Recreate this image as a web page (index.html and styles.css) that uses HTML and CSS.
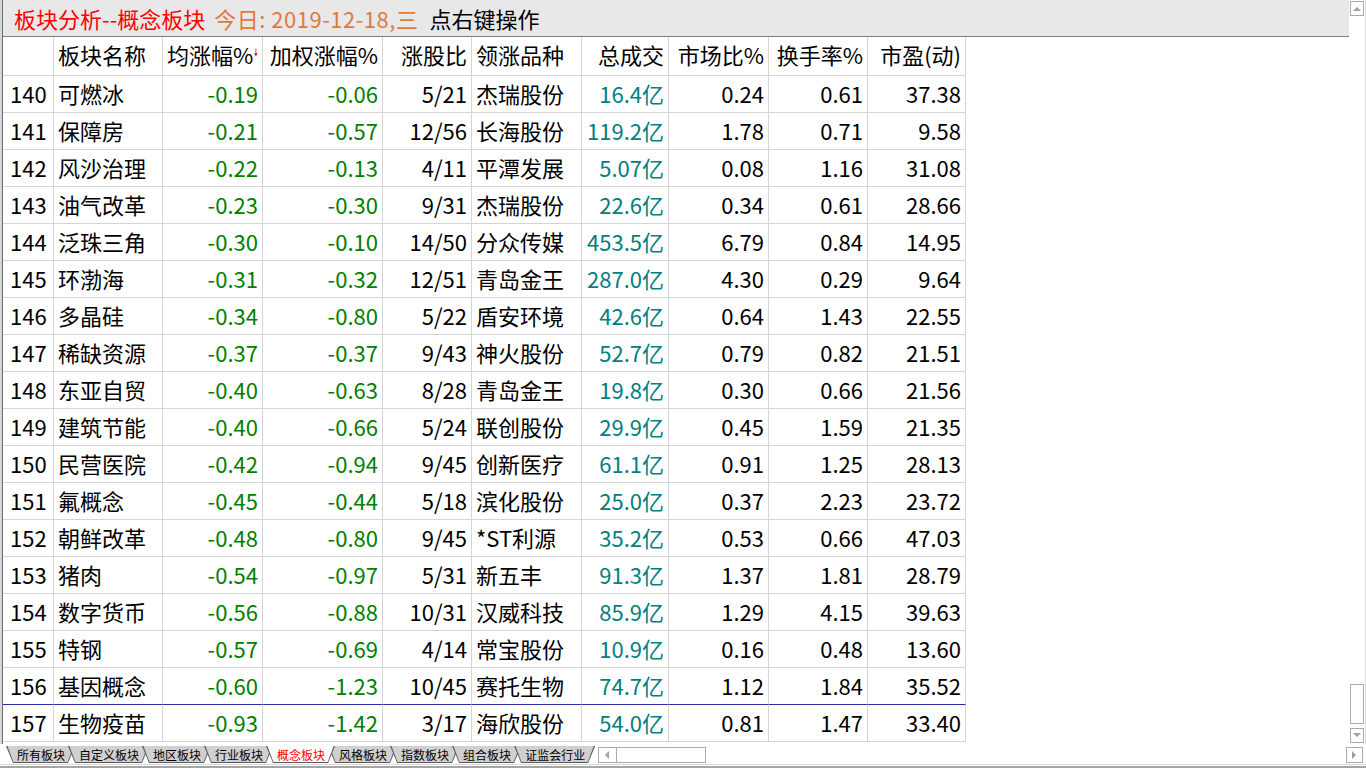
FILE: index.html
```html
<!DOCTYPE html>
<html lang="zh-CN">
<head>
<meta charset="utf-8">
<title>板块分析--概念板块</title>
<link rel="stylesheet" href="styles.css">
</head>
<body>
<div class="app">
  <div class="content">
    <div class="main">
      <div class="titlebar">
        <span class="t-red">板块分析--概念板块</span><span class="t-orange">今日: 2019-12-18,三</span><span class="t-black">点右键操作</span>
      </div>
      <div class="grid">
        <div class="row head">
          <div class="l"></div>
          <div class="l">板块名称</div>
          <div class="r">均涨幅%<svg class="sort" width="7" height="15" viewBox="0 0 7 15"><line x1="3.5" y1="0" x2="3.5" y2="10" stroke="#e00000" stroke-width="1.3"/><polygon points="0.5,9 6.5,9 3.5,15" fill="#e00000"/></svg></div>
          <div class="r">加权涨幅%</div>
          <div class="r">涨股比</div>
          <div class="l">领涨品种</div>
          <div class="r">总成交</div>
          <div class="r">市场比%</div>
          <div class="r">换手率%</div>
          <div class="r">市盈(动)</div>
        </div>
        <div class="row"><div class="n">140</div><div class="l">可燃冰</div><div class="r g">-0.19</div><div class="r g">-0.06</div><div class="r">5/21</div><div class="l">杰瑞股份</div><div class="r t">16.4亿</div><div class="r">0.24</div><div class="r">0.61</div><div class="r">37.38</div></div>
        <div class="row"><div class="n">141</div><div class="l">保障房</div><div class="r g">-0.21</div><div class="r g">-0.57</div><div class="r">12/56</div><div class="l">长海股份</div><div class="r t">119.2亿</div><div class="r">1.78</div><div class="r">0.71</div><div class="r">9.58</div></div>
        <div class="row"><div class="n">142</div><div class="l">风沙治理</div><div class="r g">-0.22</div><div class="r g">-0.13</div><div class="r">4/11</div><div class="l">平潭发展</div><div class="r t">5.07亿</div><div class="r">0.08</div><div class="r">1.16</div><div class="r">31.08</div></div>
        <div class="row"><div class="n">143</div><div class="l">油气改革</div><div class="r g">-0.23</div><div class="r g">-0.30</div><div class="r">9/31</div><div class="l">杰瑞股份</div><div class="r t">22.6亿</div><div class="r">0.34</div><div class="r">0.61</div><div class="r">28.66</div></div>
        <div class="row"><div class="n">144</div><div class="l">泛珠三角</div><div class="r g">-0.30</div><div class="r g">-0.10</div><div class="r">14/50</div><div class="l">分众传媒</div><div class="r t">453.5亿</div><div class="r">6.79</div><div class="r">0.84</div><div class="r">14.95</div></div>
        <div class="row"><div class="n">145</div><div class="l">环渤海</div><div class="r g">-0.31</div><div class="r g">-0.32</div><div class="r">12/51</div><div class="l">青岛金王</div><div class="r t">287.0亿</div><div class="r">4.30</div><div class="r">0.29</div><div class="r">9.64</div></div>
        <div class="row"><div class="n">146</div><div class="l">多晶硅</div><div class="r g">-0.34</div><div class="r g">-0.80</div><div class="r">5/22</div><div class="l">盾安环境</div><div class="r t">42.6亿</div><div class="r">0.64</div><div class="r">1.43</div><div class="r">22.55</div></div>
        <div class="row"><div class="n">147</div><div class="l">稀缺资源</div><div class="r g">-0.37</div><div class="r g">-0.37</div><div class="r">9/43</div><div class="l">神火股份</div><div class="r t">52.7亿</div><div class="r">0.79</div><div class="r">0.82</div><div class="r">21.51</div></div>
        <div class="row"><div class="n">148</div><div class="l">东亚自贸</div><div class="r g">-0.40</div><div class="r g">-0.63</div><div class="r">8/28</div><div class="l">青岛金王</div><div class="r t">19.8亿</div><div class="r">0.30</div><div class="r">0.66</div><div class="r">21.56</div></div>
        <div class="row"><div class="n">149</div><div class="l">建筑节能</div><div class="r g">-0.40</div><div class="r g">-0.66</div><div class="r">5/24</div><div class="l">联创股份</div><div class="r t">29.9亿</div><div class="r">0.45</div><div class="r">1.59</div><div class="r">21.35</div></div>
        <div class="row"><div class="n">150</div><div class="l">民营医院</div><div class="r g">-0.42</div><div class="r g">-0.94</div><div class="r">9/45</div><div class="l">创新医疗</div><div class="r t">61.1亿</div><div class="r">0.91</div><div class="r">1.25</div><div class="r">28.13</div></div>
        <div class="row"><div class="n">151</div><div class="l">氟概念</div><div class="r g">-0.45</div><div class="r g">-0.44</div><div class="r">5/18</div><div class="l">滨化股份</div><div class="r t">25.0亿</div><div class="r">0.37</div><div class="r">2.23</div><div class="r">23.72</div></div>
        <div class="row"><div class="n">152</div><div class="l">朝鲜改革</div><div class="r g">-0.48</div><div class="r g">-0.80</div><div class="r">9/45</div><div class="l">*ST利源</div><div class="r t">35.2亿</div><div class="r">0.53</div><div class="r">0.66</div><div class="r">47.03</div></div>
        <div class="row"><div class="n">153</div><div class="l">猪肉</div><div class="r g">-0.54</div><div class="r g">-0.97</div><div class="r">5/31</div><div class="l">新五丰</div><div class="r t">91.3亿</div><div class="r">1.37</div><div class="r">1.81</div><div class="r">28.79</div></div>
        <div class="row"><div class="n">154</div><div class="l">数字货币</div><div class="r g">-0.56</div><div class="r g">-0.88</div><div class="r">10/31</div><div class="l">汉威科技</div><div class="r t">85.9亿</div><div class="r">1.29</div><div class="r">4.15</div><div class="r">39.63</div></div>
        <div class="row"><div class="n">155</div><div class="l">特钢</div><div class="r g">-0.57</div><div class="r g">-0.69</div><div class="r">4/14</div><div class="l">常宝股份</div><div class="r t">10.9亿</div><div class="r">0.16</div><div class="r">0.48</div><div class="r">13.60</div></div>
        <div class="row cur"><div class="n">156</div><div class="l">基因概念</div><div class="r g">-0.60</div><div class="r g">-1.23</div><div class="r">10/45</div><div class="l">赛托生物</div><div class="r t">74.7亿</div><div class="r">1.12</div><div class="r">1.84</div><div class="r">35.52</div></div>
        <div class="row"><div class="n">157</div><div class="l">生物疫苗</div><div class="r g">-0.93</div><div class="r g">-1.42</div><div class="r">3/17</div><div class="l">海欣股份</div><div class="r t">54.0亿</div><div class="r">0.81</div><div class="r">1.47</div><div class="r">33.40</div></div>
      </div>
    </div>
    <div class="vscroll">
      <div class="sbtn"><svg width="8" height="5" viewBox="0 0 8 5"><polygon points="0,5 8,5 4,1" fill="#a0a0a0"/></svg></div>
      <div class="vtrack"></div>
      <div class="vthumb"></div>
      <div class="sbtn down"><svg width="8" height="5" viewBox="0 0 8 5"><polygon points="0,0 8,0 4,4" fill="#a0a0a0"/></svg></div>
    </div>
  </div>
  <div class="footer">
    <div class="tabs">
      <div class="tab">所有板块</div>
      <div class="tab">自定义板块</div>
      <div class="tab">地区板块</div>
      <div class="tab">行业板块</div>
      <div class="tab active">概念板块</div>
      <div class="tab">风格板块</div>
      <div class="tab">指数板块</div>
      <div class="tab">组合板块</div>
      <div class="tab">证监会行业</div>
    </div>
    <div class="hscroll">
      <div class="hbtn"><svg width="5" height="8" viewBox="0 0 5 8"><polygon points="4,0 4,8 0,4" fill="#a0a0a0"/></svg></div>
      <div class="hthumb"></div>
    </div>
    <div class="hspace"></div>
    <div class="rbtn"><svg width="5" height="8" viewBox="0 0 5 8"><polygon points="0,0 0,8 4,4" fill="#a0a0a0"/></svg></div>
  </div>
  <div class="bottomline"></div>
</div>
</body>
</html>
```
FILE: styles.css
```css
html, body {
  margin: 0;
  padding: 0;
  background: #ffffff;
}
body {
  width: 1366px;
  height: 768px;
  overflow: hidden;
  font-family: "Noto Sans CJK SC", "Microsoft YaHei", sans-serif;
  color: #000;
}
.app {
  display: flex;
  flex-direction: column;
  width: 1366px;
  height: 768px;
}
.content {
  display: flex;
  height: 744px;
}
.main {
  width: 1346px;
  margin-left: 2px;
  border-left: 1px solid #6e6e6e;
  box-shadow: -2px 0 0 #d6d6d6;
  display: flex;
  flex-direction: column;
}
.titlebar {
  height: 35px;
  border-bottom: 1px solid #7c7c7c;
  background: #e8e8e8;
  display: flex;
  align-items: center;
  padding: 0 0 1px 11px;
  box-sizing: content-box;
  font-size: 22px;
  line-height: 34px;
  white-space: nowrap;
}
.t-red { color: #ff0000; }
.t-orange { color: #e07a3c; margin-left: 9px; letter-spacing: 0.5px; }
.t-black { color: #000; margin-left: 11px; }

.grid {
  display: grid;
  grid-template-columns: 51px 109px 100px 120px 89px 110px 87px 100px 99px 98px;
  grid-template-rows: 39px;
  grid-auto-rows: 37px;
  width: 963px;
  font-size: 22px;
}
.row { display: contents; }
.row > div {
  box-sizing: border-box;
  border-right: 1px solid #d4d4d4;
  border-bottom: 1px solid #d4d4d4;
  display: flex;
  align-items: center;
  padding: 0 4px 2px 4px;
  white-space: nowrap;
  overflow: hidden;
}
.row.head > div { padding-bottom: 4px; }
.row.cur > div { border-bottom-color: #2b2ba8; }
.row > .n { padding-left: 7px; }
.row > .l { justify-content: flex-start; }
.row > .r { justify-content: flex-end; }
.row > .g { color: #008000; }
.row > .t { color: #008080; }
.sort {
  margin-left: 1px;
  margin-top: -3px;
}

.vscroll {
  box-sizing: border-box;
  width: 17px;
  border-right: 1px solid #dcdcdc;
  padding: 1px 0 0 1px;
  display: flex;
  flex-direction: column;
}
.sbtn {
  box-sizing: border-box;
  width: 14px;
  height: 15px;
  border: 1px solid #ababab;
  display: flex;
  align-items: center;
  justify-content: center;
}
.sbtn.down { margin-bottom: 1px; }
.vtrack { flex: 1; }
.vthumb {
  box-sizing: border-box;
  width: 14px;
  height: 40px;
  border: 1px solid #ababab;
  margin-bottom: 4px;
}

.footer {
  height: 20px;
  display: flex;
  align-items: flex-start;
  padding-top: 2px;
  box-sizing: border-box;
}
.tabs {
  display: flex;
  padding-left: 6px;
}
.tab {
  position: relative;
  z-index: 0;
  height: 17px;
  line-height: 17px;
  font-size: 12px;
  padding: 0 10px 0 11px;
  margin-right: -7px;
  white-space: nowrap;
  color: #000;
}
.tab:last-child { margin-right: 0; }
.tab::before,
.tab::after {
  content: "";
  position: absolute;
  inset: 0;
  z-index: -1;
}
.tab::before {
  background: #5a5a5a;
  clip-path: polygon(0 0, 100% 0, calc(100% - 7px) 100%, 7px 100%);
}
.tab::after {
  background: #d0d0d0;
  clip-path: polygon(1.4px 0, calc(100% - 1.4px) 0, calc(100% - 7.4px) calc(100% - 1px), 7.4px calc(100% - 1px));
}
.tab.active {
  z-index: 2;
  color: #ff0000;
}
.tab.active::after { background: #ffffff; }

.hscroll {
  display: flex;
  margin-left: 3px;
  margin-top: 1px;
  box-sizing: border-box;
  width: 108px;
  height: 16px;
  border: 1px solid #ababab;
}
.hbtn {
  width: 17px;
  border-right: 1px solid #ababab;
  display: flex;
  align-items: center;
  justify-content: center;
}
.hthumb { flex: 1; }
.hspace { flex: 1; }
.rbtn {
  box-sizing: border-box;
  width: 17px;
  height: 16px;
  margin-top: 1px;
  margin-right: 3px;
  border: 1px solid #ababab;
  display: flex;
  align-items: center;
  justify-content: center;
}
.bottomline {
  box-sizing: border-box;
  height: 4px;
  border-top: 1px solid #d8d8d8;
  border-bottom: 2px solid #a4a4a4;
}
```
